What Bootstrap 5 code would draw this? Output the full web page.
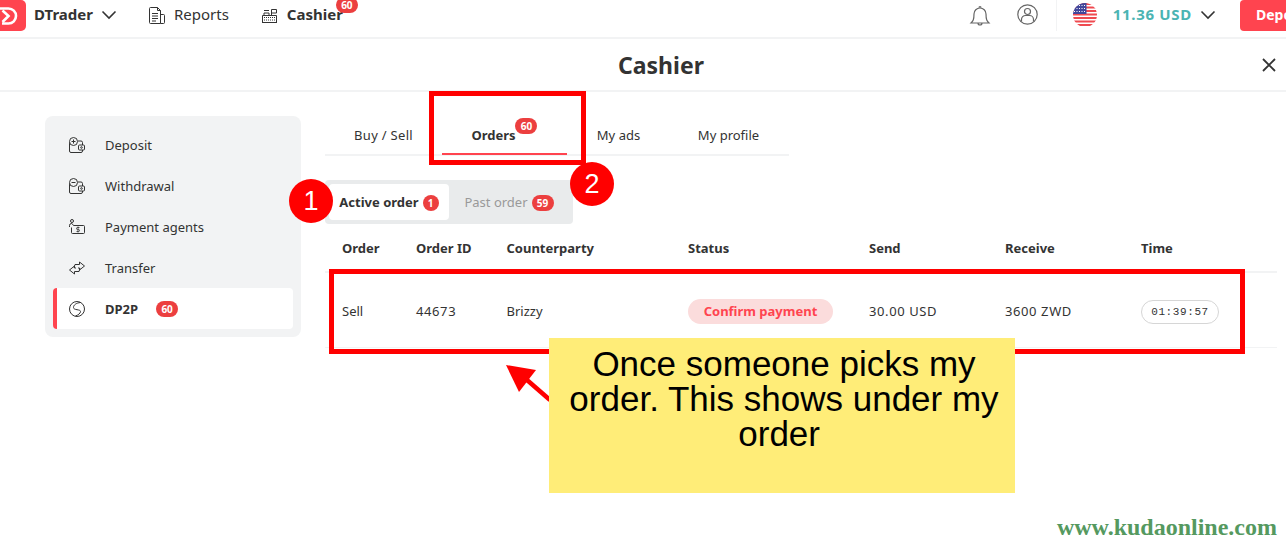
<!DOCTYPE html>
<html lang="en">
<head>
  <meta charset="UTF-8" />
  <title>Cashier</title>
  <link href="https://cdn.jsdelivr.net/npm/bootstrap@5.3.3/dist/css/bootstrap.min.css" rel="stylesheet" />
  <style>
    html, body { height: 554px; overflow: hidden; }
    body { position: relative; background: #fff; color: #333; font-family: "Noto Sans", "Liberation Sans", sans-serif; font-size: 13px; }

    .top-bar { height: 39px; border-bottom: 2px solid #f2f3f4; padding-bottom: 8px; }
    .top-bar svg { display: block; flex-shrink: 0; }
    .logo-box { width: 26px; height: 31px; margin-top: 2px; background: #ff444f; border-radius: 0 5px 5px 0; }
    .top-link { font-size: 15px; color: #333; margin-left: 8px; }
    .top-strong { font-weight: 700; }
    .cashier-wrap { position: relative; margin-left: 9px; }
    .gap-chev { margin-left: 8px; }
    .gap-nav { margin-left: 32px; margin-top: 2px; }
    .pill-red { background: #ec3f3f; color: #fff; font-size: 10px; font-weight: 700; line-height: 16px; border-radius: 8px; min-width: 22px; padding: 0 4px; text-align: center; display: inline-block; }
    .pill-top { position: absolute; left: 49px; top: -6px; }
    .pill-tab { position: absolute; left: 44px; top: -8px; }
    .gap-user { margin-left: 26px; }
    .acct-sep { width: 1px; height: 31px; margin: 2px 16px 0 18px; background: #f2f3f4; }
    .acct-flag { margin-top: 1px; }
    .acct-amount { font-size: 15px; font-weight: 700; color: #4bb4b3; letter-spacing: .7px; margin: 0 8px 0 16px; }
    .deposit-btn { background: #ff444f; color: #fff; font-size: 14px; font-weight: 700; width: 46px; height: 31px; margin: 2px 0 0 24px; border-radius: 4px 0 0 4px; padding-left: 16px; line-height: 30px; overflow: hidden; white-space: nowrap; }

    .head-bar { height: 53px; border-bottom: 2px solid #f2f3f4; position: relative; padding-left: 36px; }
    .head-title { font-size: 23px; font-weight: 700; line-height: 53px; color: #333; }
    .close-x { position: absolute; right: 10px; top: 19px; }

    .main-area { padding: 24px 0 0 45px; gap: 24px; }
    .side-menu { width: 256px; height: 221px; background: #f2f3f4; border-radius: 8px; padding: 8px; flex-shrink: 0; }
    .side-item { height: 41px; padding: 0 0 0 16px; gap: 20px; font-size: 13px; color: #333; border-radius: 4px; }
    .side-label { padding-top: 2px; }
    .side-item.is-on { background: #fff; border-left: 4px solid #ff444f; padding-left: 12px; font-weight: 700; }
    .side-item .pill-red { margin-left: -2px; }

    .tab-strip { width: 464px; height: 40px; border-bottom: 2px solid #f2f3f4; }
    .tab-cell { height: 38px; padding-top: 2px; font-size: 13px; color: #333; width: 117px; position: relative; }
    .tab-cell.is-on { font-weight: 700; width: 125px; }
    .tab-cell.is-on::after { content: ""; position: absolute; left: 0; right: 0; bottom: -1px; height: 2px; background: #ff444f; }
    .tab-buy { letter-spacing: .3px; }
    .tab-ads { width: 103px; }
    .tab-text { position: relative; margin-right: 22px; }
    .order-switch { width: 248px; height: 44px; margin-top: 24px; background: #e9ebec; border-radius: 4px; padding: 4px; }
    .switch-on, .switch-off { width: 120px; height: 36px; padding-top: 1px; font-size: 13px; gap: 4px; border-radius: 4px; }
    .switch-on { background: #fff; font-weight: 700; }
    .switch-off { color: #999; }
    .pill-sm { min-width: 16px; padding: 0 2px; }

    .order-grid { width: 952px; }
    .grid-row { display: grid; grid-template-columns: 74px 90.5px 181.5px 181px 136px 136px 1fr; padding-left: 17px; align-items: center; }
    .grid-head { height: 49px; font-weight: 700; color: #333; border-bottom: 2px solid #f2f3f4; padding-top: 3px; }
    .grid-body { height: 75px; border-bottom: 1px solid #f2f3f4; padding-top: 3px; }
    .num-cell { letter-spacing: .6px; }
    .status-pill { background: #fbdcdc; color: #ff444f; font-weight: 700; width: 145px; height: 25px; line-height: 24px; border-radius: 13px; text-align: center; }
    .timer-pill { width: 78px; height: 24px; line-height: 22px; border: 1px solid #d6d6d6; border-radius: 12px; text-align: center; font-family: "Liberation Mono", monospace; font-size: 11px; letter-spacing: .6px; }

    /* annotation layer on top of the screenshot */
    .note-frame { position: absolute; border: 5px solid #f00; }
    .frame-tab { left: 429px; top: 91px; width: 157px; height: 74px; }
    .frame-row { left: 329px; top: 269px; width: 916px; height: 85px; }
    .note-num { position: absolute; width: 44px; height: 44px; border-radius: 50%; background: #f00; color: #fff; font: 27px/44px "Liberation Sans", sans-serif; text-align: center; }
    .num-one { left: 289px; top: 179px; }
    .num-two { left: 570px; top: 162px; }
    .note-box { position: absolute; left: 549px; top: 338px; width: 466px; height: 155px; background: #ffed78; color: #000; font: 35px/35px "Liberation Sans", sans-serif; text-align: center; padding: 8px 10px 0 14px; }
    .note-arrow { position: absolute; left: 500px; top: 360px; }
    .site-mark { position: absolute; right: 9px; top: 513px; font: 700 24px/28px "Liberation Serif", serif; color: #55995f; }
  </style>
</head>
<body>

  <div class="top-bar d-flex align-items-center">
    <div class="logo-box">
      <svg width="26" height="31" viewBox="0 0 26 31" fill="none" stroke="#fff"><path d="M0 8.500h8.500a7.500 7.500 0 0 1 0 15H2" stroke-width="2.600"/><path d="M2.500 10.500 8.500 16l-6 6" stroke-width="2.600"/></svg>
    </div>
    <span class="top-link top-strong">DTrader</span>
    <svg class="gap-chev" width="16" height="16" viewBox="0 0 16 16" fill="none" stroke="#333" stroke-width="1.600"><path d="M1.500 4.500 8 11l6.500-6.500"/></svg>
    <svg class="gap-nav" width="17" height="17" viewBox="0 0 17 17" fill="none" stroke="#333"><path d="M.5 1.500a1 1 0 0 1 1-1h7l3 3v13h-10a1 1 0 0 1-1-1zM8.500.5v3h3M11.500 7.500h3a1 1 0 0 1 1 1v7a1 1 0 0 1-1 1h-3M3 6.500h6M3 9h6M3 11.500h6M3 14h4"/></svg>
    <span class="top-link">Reports</span>
    <svg class="gap-nav" width="17" height="16" viewBox="0 0 17 16" fill="none" stroke="#333"><path d="M1.500 7.500h14v7h-14zM1 14.500h15M3 7.500v-2.500h5v2.500M3 2.500h5M10.500 7.500V1.500h5v3.500h-5"/><path d="M3 9.500h11M3 12h11" stroke-dasharray="1 1"/></svg>
    <span class="cashier-wrap top-link top-strong">Cashier<span class="pill-red pill-top">60</span></span>
    <div class="ms-auto d-flex align-items-center">
      <svg width="22" height="24" viewBox="0 0 22 24" fill="none" stroke="#666" stroke-width="1.200"><path d="M2 20c2-2 3-3 3-9a6 6 0 0 1 12 0c0 6 1 7 3 9zM9 20a2 2 0 0 0 4 0M10 4.500a1 1 0 0 1 2 0"/></svg>
      <svg class="gap-user" width="21" height="21" viewBox="0 0 21 21" fill="none" stroke="#666" stroke-width="1.200"><circle cx="10.500" cy="10.500" r="9.700"/><circle cx="10.500" cy="7.500" r="3"/><path d="M4.500 17.500v-2a4 4 0 0 1 4-4h4a4 4 0 0 1 4 4v2"/></svg>
      <div class="acct-sep"></div>
      <svg class="acct-flag" width="24" height="24" viewBox="0 0 24 24"><defs><clipPath id="flag"><circle cx="12" cy="12" r="12"/></clipPath></defs><g clip-path="url(#flag)"><rect width="24" height="24" fill="#fff"/><path d="M0 1h24M0 4.500h24M0 8h24M0 11.500h24M0 15h24M0 18.500h24M0 22h24" stroke="#ef4a50" stroke-width="1.800"/><rect width="13.500" height="11" fill="#42479b"/><path d="M1 2.500h12M1 5.500h12M1 8.500h12" stroke="#fff" stroke-width="1" stroke-dasharray="1 1.500"/></g></svg>
      <span class="acct-amount">11.36 USD</span>
      <svg width="16" height="16" viewBox="0 0 16 16" fill="none" stroke="#333" stroke-width="1.600"><path d="M1.500 4.500 8 11l6.500-6.500"/></svg>
      <div class="deposit-btn">Deposit</div>
    </div>
  </div>

  <div class="head-bar text-center">
    <div class="head-title">Cashier</div>
    <svg class="close-x" width="14" height="14" viewBox="0 0 14 14" stroke="#333" stroke-width="1.800"><path d="M1 1l12 12M13 1 1 13"/></svg>
  </div>

  <div class="main-area d-flex">
    <div class="side-menu">
      <div class="side-item d-flex align-items-center">
        <svg width="16" height="16" viewBox="0 0 16 16" fill="none" stroke="#333"><path d="M.5 5v9a1.500 1.500 0 0 0 1.500 1.500h10a1.500 1.500 0 0 0 1.500-1.500V5.500a1.500 1.500 0 0 0-1.500-1.500H9"/><circle cx="4.500" cy="4.500" r="4" fill="#f2f3f4"/><path d="M4.500 2.500v4M2.500 4.500h4"/><rect x="9.500" y="8" width="6" height="5" rx="1" fill="#f2f3f4"/><circle cx="12.500" cy="10.500" r=".8"/></svg>
        <span class="side-label">Deposit</span>
      </div>
      <div class="side-item d-flex align-items-center">
        <svg width="16" height="16" viewBox="0 0 16 16" fill="none" stroke="#333"><path d="M.5 5v9a1.500 1.500 0 0 0 1.500 1.500h10a1.500 1.500 0 0 0 1.500-1.500V5.500a1.500 1.500 0 0 0-1.500-1.500H9"/><circle cx="4.500" cy="4.500" r="4" fill="#f2f3f4"/><path d="M2.500 4.500h4"/><rect x="9.500" y="8" width="6" height="5" rx="1" fill="#f2f3f4"/><circle cx="12.500" cy="10.500" r=".8"/></svg>
        <span class="side-label">Withdrawal</span>
      </div>
      <div class="side-item d-flex align-items-center">
        <svg width="16" height="16" viewBox="0 0 16 16" fill="none" stroke="#333"><circle cx="3" cy="2" r="1.500"/><path d="M.5 8V6.500a2 2 0 0 1 2-2h.5l1.500 2h10a1 1 0 0 1 1 1v6a1 1 0 0 1-1 1H3.500a1 1 0 0 1-1-1V8.500"/><path d="M10.500 8.500h-2a.9.9 0 0 0 0 2h1a.9.9 0 0 1 0 2h-2M9 7.500v6" stroke-width=".8"/></svg>
        <span class="side-label">Payment agents</span>
      </div>
      <div class="side-item d-flex align-items-center">
        <svg width="16" height="16" viewBox="0 0 16 16" fill="none" stroke="#333"><path d="M5 7.500 6 4.500h4.500V2l5 4-5 4V8H9"/><path d="M11 8.500 10 11.500H5.500V14l-5-4 5-4v2H7"/></svg>
        <span class="side-label">Transfer</span>
      </div>
      <div class="side-item is-on d-flex align-items-center">
        <svg width="16" height="16" viewBox="0 0 16 16" fill="none" stroke="#333"><circle cx="8" cy="8" r="7.500"/><path d="M11.500 1.500C7 2 4.500 4 4.500 6.500c0 3 7 1.500 7 4 0 2-2.500 3.500-5 4.500"/></svg>
        <span class="side-label">DP2P</span><span class="pill-red">60</span>
      </div>
    </div>

    <div class="flex-grow-1">
      <div class="tab-strip d-flex">
        <div class="tab-cell tab-buy d-flex align-items-center justify-content-center">Buy / Sell</div>
        <div class="tab-cell is-on d-flex align-items-center justify-content-center"><span class="tab-text">Orders<span class="pill-red pill-tab">60</span></span></div>
        <div class="tab-cell tab-ads d-flex align-items-center justify-content-center">My ads</div>
        <div class="tab-cell d-flex align-items-center justify-content-center">My profile</div>
      </div>
      <div class="order-switch d-flex">
        <div class="switch-on d-flex align-items-center justify-content-center">Active order <span class="pill-red pill-sm">1</span></div>
        <div class="switch-off d-flex align-items-center justify-content-center">Past order <span class="pill-red">59</span></div>
      </div>
      <div class="order-grid">
        <div class="grid-row grid-head">
          <div>Order</div><div>Order ID</div><div>Counterparty</div><div>Status</div><div>Send</div><div>Receive</div><div>Time</div>
        </div>
        <div class="grid-row grid-body">
          <div>Sell</div><div class="num-cell">44673</div><div>Brizzy</div>
          <div><div class="status-pill">Confirm payment</div></div>
          <div class="num-cell">30.00 USD</div><div class="num-cell">3600 ZWD</div>
          <div><div class="timer-pill">01:39:57</div></div>
        </div>
      </div>
    </div>
  </div>

  <div class="note-frame frame-tab"></div>
  <div class="note-frame frame-row"></div>
  <div class="note-num num-one">1</div>
  <div class="note-num num-two">2</div>
  <svg class="note-arrow" width="60" height="50" viewBox="0 0 60 50"><path d="M27 20 50 40" stroke="#f00" stroke-width="4.500"/><path d="M6 5 36 10 19 32z" fill="#f00"/></svg>
  <div class="note-box">Once someone picks my order. This shows under my order&nbsp;</div>
  <div class="site-mark">www.kudaonline.com</div>

</body>
</html>
